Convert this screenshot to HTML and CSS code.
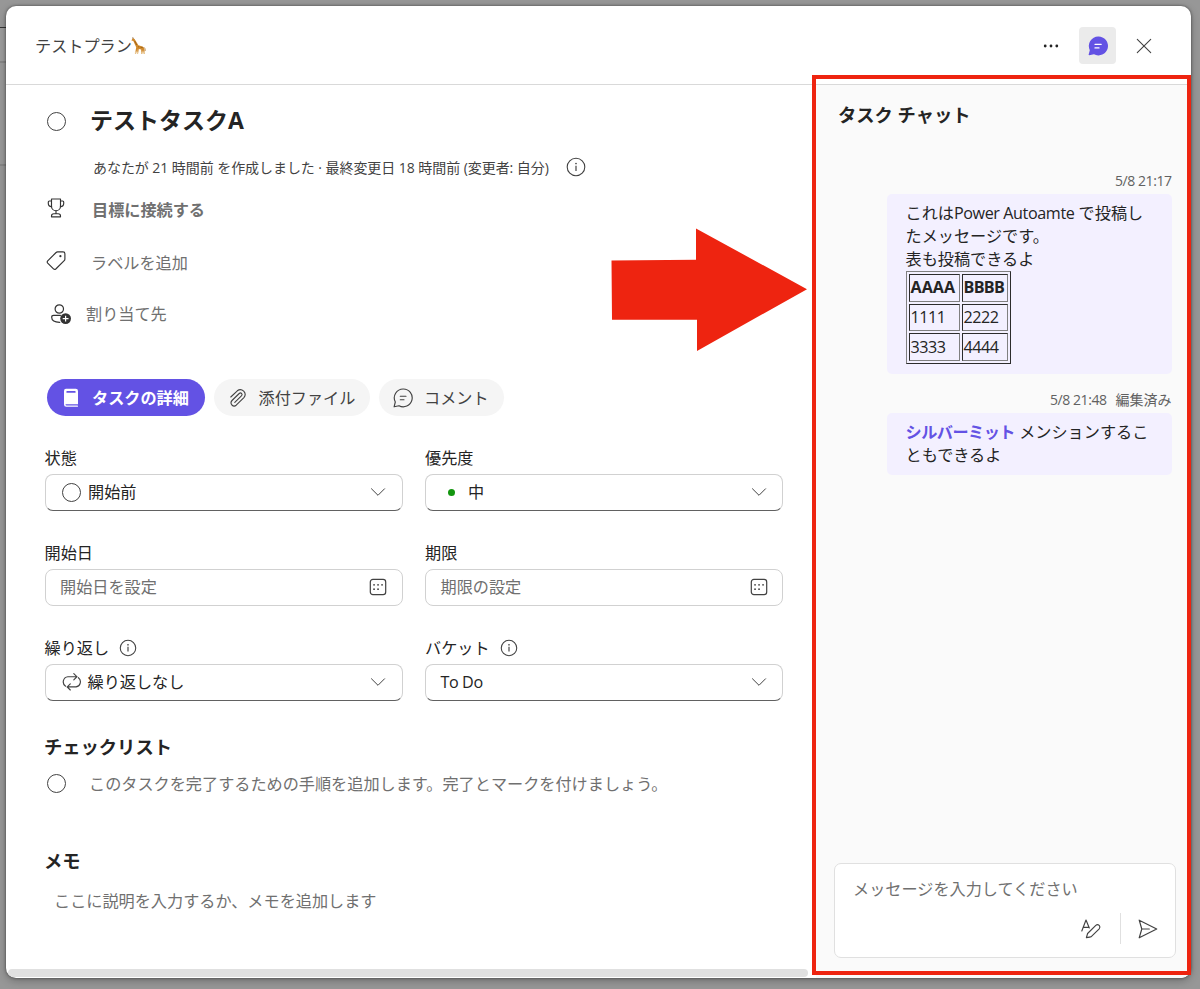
FILE: index.html
```html
<!DOCTYPE html>
<html lang="ja">
<head>
    <meta charset="UTF-8">
    <meta name="viewport" content="width=device-width, initial-scale=1.0">
    <title>テストタスクA</title>
    <link rel="stylesheet" href="styles.css">
</head>
<body>
    <!-- Page behind the dialog -->
    <div class="backdrop"></div>

    <div class="dialog">
        <!-- Header Section -->
        <header>
            <div class="plan-name">
                <span>テストプラン</span>
                <svg class="giraffe" viewBox="0 0 16 18">
                    <path d="M1.6 1.2L3.6 2L7.4 8.2L11.5 9.4Q13.2 10 13.3 12L13.8 17H12.8L12 13L11.2 17H10.2L10.2 12.6L7.8 12L7 17H6L6.3 12L5 17H4L5.2 10.2L2.3 3.9L.4 3.6Z" fill="#d08a2c"/>
                    <path d="M13 10.3Q14.6 11.5 14.2 14" fill="none" stroke="#a8681c" stroke-width=".7"/>
                    <path d="M3.6 4L5.8 8M7 9.8H8.3M9.6 10.4H11.8" stroke="#9c5f18" stroke-width=".9"/>
                    <path d="M4.4 17V14.6M6.5 17V14.6M10.8 17V14.6M13.3 17V14.6" stroke="#f0d9b0" stroke-width=".8"/>
                    <path d="M1.8 .3L2.2 1.8" stroke="#7a4a16" stroke-width=".8"/>
                </svg>
            </div>
            <div class="header-buttons">
                <button class="icon-button">
                    <svg width="18" height="18" viewBox="0 0 18 18" fill="#242424"><circle cx="3.2" cy="9" r="1.4"/><circle cx="9" cy="9" r="1.4"/><circle cx="14.8" cy="9" r="1.4"/></svg>
                </button>
                <button class="icon-button active">
                    <svg width="20" height="20" viewBox="0 0 20 20">
                        <path d="M10.3 .6A9.4 9.4 0 1 1 6 18.2L1.2 19.3Q.5 19.4.6 18.7L1.8 14.2A9.4 9.4 0 0 1 10.3.6Z" fill="#6352e4"/>
                        <path d="M7 8.3H13.2M7 11.9H11" stroke="#fff" stroke-width="1.3" stroke-linecap="round"/>
                    </svg>
                </button>
                <button class="icon-button">
                    <svg width="16" height="16" viewBox="0 0 16 16" fill="none" stroke="#424242" stroke-width="1.1" stroke-linecap="round"><path d="M1.3 1.3L14.7 14.7M14.7 1.3L1.3 14.7"/></svg>
                </button>
            </div>
        </header>

        <div class="main-container">
            <!-- Task form -->
            <main>
                <div class="title-row">
                    <span class="circle"></span>
                    <h1>テストタスクA</h1>
                </div>
                <div class="meta-row">
                    <span class="meta-text">あなたが 21 時間前 を作成しました · 最終変更日 18 時間前 (変更者: 自分)</span>
                    <svg width="20" height="20" viewBox="0 0 20 20"><circle cx="10" cy="10" r="8.8" fill="none" stroke="#424242" stroke-width="1.1"/><path d="M10 8.7V14" stroke="#424242" stroke-width="1.2"/><circle cx="10" cy="6.5" r=".85" fill="#424242"/></svg>
                </div>
                <div class="link-row goal">
                    <svg width="20" height="20" viewBox="0 0 20 20" fill="none" stroke="#333" stroke-width="1.15" stroke-linejoin="round" stroke-linecap="round">
                        <path d="M5.5 1H14.5V8.2A4.5 4.5 0 0 1 5.5 8.2Z"/>
                        <path d="M5.5 3H3.4Q2.3 3 2.3 4.1V5.6Q2.3 8.5 5.6 8.8M14.5 3H16.6Q17.7 3 17.7 4.1V5.6Q17.7 8.5 14.4 8.8M10 12.7V15.5M5.5 18.8V18Q5.5 15.7 7.8 15.7H12.2Q14.5 15.7 14.5 18V18.8Z"/>
                    </svg>
                    <span>目標に接続する</span>
                </div>
                <div class="link-row label">
                    <svg width="20" height="20" viewBox="0 0 20 20">
                        <path d="M10.1 1.5Q10.7 .9 11.5 .9H17Q18.9 .9 18.9 2.8V8Q18.9 9 18.2 9.7L9.8 18Q8.6 19 7.5 17.9L1.7 12.2Q.7 11.1 1.7 9.9Z" fill="none" stroke="#333" stroke-width="1.15"/>
                        <circle cx="14.4" cy="5.2" r="1.1" fill="#333"/>
                    </svg>
                    <span>ラベルを追加</span>
                </div>
                <div class="link-row assign">
                    <svg width="22" height="22" viewBox="0 0 22 22">
                        <g fill="none" stroke="#333" stroke-width="1.2" stroke-linecap="round"><circle cx="9.3" cy="6" r="4.2"/><path d="M10.5 12.3H3.6Q1.7 12.3 1.7 14.2Q1.7 19.4 9.8 19.3"/></g>
                        <circle cx="15.6" cy="15.6" r="5.4" fill="#333"/><path d="M15.6 12.7V18.5M12.7 15.6H18.5" stroke="#fff" stroke-width="1.2"/>
                    </svg>
                    <span>割り当て先</span>
                </div>

                <!-- Tabs -->
                <nav class="tabs">
                    <a class="tab tab-details selected">
                        <svg width="20" height="20" viewBox="0 0 20 20"><path d="M5 .8H14.8Q17 .8 17 3V16.3H4.5Q4.5 17.6 5.6 17.6H16.5Q17 17.6 17 18.2Q17 18.8 16.5 18.8H5.3Q3 18.8 3 16.5V3Q3 .8 5 .8Z" fill="#fff"/><rect x="5.4" y="3" width="9.2" height="1.8" rx=".6" fill="#6352e4"/></svg>
                        <span>タスクの詳細</span>
                    </a>
                    <a class="tab tab-files">
                        <svg width="20" height="20" viewBox="0 0 20 20" fill="none" stroke="#424242" stroke-width="1.1" stroke-linecap="round"><path d="M2.8 9L9.3 2.8Q12.6 .2 15.7 3.2Q18.6 6.4 15.9 9.6L8.2 17.2Q6 19 3.9 17Q2 14.6 4 12.5L11.2 5.5Q12.5 4.4 13.6 5.5Q14.6 6.7 13.4 7.9L6.8 14.3"/></svg>
                        <span>添付ファイル</span>
                    </a>
                    <a class="tab tab-comments">
                        <svg width="20" height="20" viewBox="0 0 20 20" fill="none" stroke="#424242" stroke-width="1.15" stroke-linecap="round" stroke-linejoin="round"><path d="M10.3 1A8.9 8.9 0 1 1 6 17.7L1.1 18.8L2.3 14A8.9 8.9 0 0 1 10.3 1ZM7.3 8.2H13M7.3 11.7H11"/></svg>
                        <span>コメント</span>
                    </a>
                </nav>

                <div class="fields">
                    <div class="field">
                        <label>状態</label>
                        <div class="box select">
                            <span class="circle status"></span><span class="value">開始前</span>
                            <svg class="chevron" viewBox="0 0 16 10"><path d="M1.2 1.5L8 8.3L14.8 1.5"/></svg>
                        </div>
                    </div>
                    <div class="field">
                        <label>優先度</label>
                        <div class="box select">
                            <span class="dot"></span><span class="value">中</span>
                            <svg class="chevron" viewBox="0 0 16 10"><path d="M1.2 1.5L8 8.3L14.8 1.5"/></svg>
                        </div>
                    </div>
                    <div class="field">
                        <label>開始日</label>
                        <div class="box date">
                            <span class="value">開始日を設定</span>
                            <svg class="calendar" viewBox="0 0 18 18"><rect x="1.3" y="1.3" width="15.4" height="15.4" rx="2.6"/><path d="M5 6.8H5.1M9 6.8H9.1M13 6.8H13.1M5 11.2H5.1M9 11.2H9.1"/></svg>
                        </div>
                    </div>
                    <div class="field">
                        <label>期限</label>
                        <div class="box date">
                            <span class="value">期限の設定</span>
                            <svg class="calendar" viewBox="0 0 18 18"><rect x="1.3" y="1.3" width="15.4" height="15.4" rx="2.6"/><path d="M5 6.8H5.1M9 6.8H9.1M13 6.8H13.1M5 11.2H5.1M9 11.2H9.1"/></svg>
                        </div>
                    </div>
                    <div class="field">
                        <label>繰り返し <svg width="18" height="18" viewBox="0 0 20 20"><circle cx="10" cy="10" r="8.6" fill="none" stroke="#424242" stroke-width="1.2"/><path d="M10 8.7V14" stroke="#424242" stroke-width="1.3"/><circle cx="10" cy="6.4" r=".95" fill="#424242"/></svg></label>
                        <div class="box select">
                            <svg class="repeat" viewBox="0 0 20 20"><path d="M3.6 14.2A5.2 5.2 0 0 1 5.9 4.7H14.6M11.8 1.6L14.9 4.7L11.8 7.8M16.4 5.7A5.2 5.2 0 0 1 14.1 14.9H5.6M8.3 11.8L5.2 14.9L8.3 18"/></svg><span class="value">繰り返しなし</span>
                            <svg class="chevron" viewBox="0 0 16 10"><path d="M1.2 1.5L8 8.3L14.8 1.5"/></svg>
                        </div>
                    </div>
                    <div class="field">
                        <label>バケット <svg width="18" height="18" viewBox="0 0 20 20"><circle cx="10" cy="10" r="8.6" fill="none" stroke="#424242" stroke-width="1.2"/><path d="M10 8.7V14" stroke="#424242" stroke-width="1.3"/><circle cx="10" cy="6.4" r=".95" fill="#424242"/></svg></label>
                        <div class="box select">
                            <span class="value latin">To Do</span>
                            <svg class="chevron" viewBox="0 0 16 10"><path d="M1.2 1.5L8 8.3L14.8 1.5"/></svg>
                        </div>
                    </div>
                </div>

                <h2 class="checklist-title">チェックリスト</h2>
                <div class="checklist-row">
                    <span class="circle"></span>
                    <span>このタスクを完了するための手順を追加します。完了とマークを付けましょう。</span>
                </div>

                <h2 class="memo-title">メモ</h2>
                <p class="memo-text">ここに説明を入力するか、メモを追加します</p>
                <div class="scrollbar"></div>
            </main>

            <!-- Chat panel -->
            <aside>
                <h2>タスク チャット</h2>
                <div class="time">5/8 21:17</div>
                <div class="message">
                    <p>これは<span class="latin">Power Autoamte</span> で投稿したメッセージです。</p>
                    <p>表も投稿できるよ</p>
                    <table border="1">
                        <tr><th>AAAA</th><th class="latin">BBBB</th></tr>
                        <tr><td>1111</td><td>2222</td></tr>
                        <tr><td>3333</td><td>4444</td></tr>
                    </table>
                </div>
                <div class="time second">5/8 21:48<span>編集済み</span></div>
                <div class="message">
                    <p class="mention-text"><b>シルバーミット</b> メンションすることもできるよ</p>
                </div>
                <div class="compose">
                    <p>メッセージを入力してください</p>
                    <div class="compose-buttons">
                        <svg width="22" height="22" viewBox="0 0 22 22" fill="none" stroke="#424242" stroke-width="1.15" stroke-linecap="round" stroke-linejoin="round"><path d="M1.8 13L6 2L9.3 10M3.2 9.3H8.3M6.4 19.6L7.6 15.5L15.8 7.4Q17.5 6 19.2 7.4Q20.7 9.1 19.2 10.8L11 18.8Q10.4 19.3 6.4 19.6Z"/></svg>
                        <span class="divider"></span>
                        <svg width="20" height="20" viewBox="0 0 20 20" fill="none" stroke="#424242" stroke-width="1.2" stroke-linecap="round" stroke-linejoin="round"><path d="M1.2 1.2L18.7 10L1.2 18.8L3.8 10ZM3.8 10H11.3"/></svg>
                    </div>
                </div>
            </aside>
        </div>
    </div>

    <!-- Annotations over the dialog -->
    <svg class="arrow" viewBox="0 0 196 124"><path d="M.5 32.5L85 31.8V.5L196 61.2L86 123V91.8H1Z" fill="#ee2410"/></svg>
    <div class="frame"></div>
</body>
</html>
```
FILE: styles.css
```css
/* Basic reset */
* {
    margin: 0;
    padding: 0;
    box-sizing: border-box;
}

body {
    width: 1200px;
    height: 989px;
    padding: 6px;
    overflow: hidden;
    position: relative;
    background-color: #979797;
    color: #242424;
    font-family: "Open Sans", "Noto Sans CJK JP", sans-serif;
    font-size: 16.15px;
    line-height: 24px;
}

svg {
    flex: none;
    display: block;
}

.latin {
    letter-spacing: -0.4px;
}

.backdrop {
    position: absolute;
    left: 0;
    top: 27px;
    width: 10px;
    height: 139px;
    border-top: 1px solid #333;
    border-bottom: 2px solid #868686;
    background: linear-gradient(#9c9c9c 33px, #868686 33px, #868686 35px, #999 35px);
}

.dialog {
    position: relative;
    width: 1185px;
    height: 972px;
    background-color: white;
    border-radius: 10px;
    box-shadow: 0 0 3px rgba(0, 0, 0, 0.5), 0 3px 9px rgba(0, 0, 0, 0.25);
    overflow: hidden;
}

/* Header Section */
header {
    height: 79px;
    padding: 1px 28.5px 0 29px;
    border-bottom: 1px solid #d9d9d9;
    display: flex;
    align-items: center;
    justify-content: space-between;
}

.plan-name {
    display: flex;
    align-items: center;
    color: #424242;
}

.giraffe {
    width: 16px;
    height: 18px;
    margin-left: -1px;
}

.header-buttons {
    display: flex;
    gap: 9.5px;
}

.icon-button {
    width: 37px;
    height: 37px;
    border: none;
    border-radius: 4px;
    background: none;
    display: flex;
    align-items: center;
    justify-content: center;
}

.icon-button.active {
    background-color: #ebebeb;
}

.main-container {
    display: flex;
    height: 893px;
}

/* Task form */
main {
    width: 810px;
    padding: 0 33px 0 38px;
}

.circle {
    flex: none;
    width: 19px;
    height: 19px;
    border: 1px solid #424242;
    border-radius: 50%;
}

.title-row {
    height: 72px;
    padding: 1px 0 0 3px;
    display: flex;
    align-items: center;
    gap: 24px;
}

h1 {
    font-size: 23px;
    line-height: 34px;
    padding-bottom: 3px;
}

.meta-row {
    height: 22px;
    padding-left: 49px;
    display: flex;
    align-items: center;
    gap: 17px;
    font-size: 14px;
    letter-spacing: -0.06px;
    color: #424242;
}

.meta-row svg {
    margin-bottom: 2px;
}

.meta-text {
    white-space: nowrap;
}

.link-row {
    height: 52px;
    padding-left: 2px;
    display: flex;
    align-items: center;
    gap: 26px;
    color: #707070;
}

.goal {
    margin-top: 5px;
    font-weight: bold;
}

.goal svg {
    margin-bottom: 5px;
}

.label {
    padding-top: 2px;
    gap: 25px;
}

.label svg {
    margin-bottom: 5px;
}

.assign {
    padding-left: 6px;
    gap: 14px;
}

.tabs {
    margin: 39px 0 0 3px;
    display: flex;
    gap: 9px;
}

.tab {
    height: 37px;
    border-radius: 19px;
    background-color: #f5f5f5;
    color: #424242;
    display: flex;
    align-items: center;
    gap: 11px;
    padding-left: 14px;
}

.tab-details {
    width: 157.5px;
}

.tab-files {
    width: 156.5px;
}

.tab-comments {
    width: 125px;
}

.tab.selected {
    background-color: #6352e4;
    color: white;
    font-weight: bold;
}

.fields {
    margin: 29.5px 0 0 0.5px;
    display: grid;
    grid-template-columns: 358px 358px;
    gap: 30px 22.5px;
}

.field label {
    height: 24px;
    margin-bottom: 4px;
    display: flex;
    align-items: center;
    gap: 10px;
}

.box {
    height: 37px;
    padding: 0 14.5px;
    border: 1px solid #d1d1d1;
    border-radius: 8px;
    display: flex;
    align-items: center;
}

.box .value {
    flex: 1;
}

.select {
    padding-right: 15.5px;
    border-bottom-color: #616161;
}

.date {
    color: #707070;
}

.status {
    margin: 0 7px 0 2px;
}

.dot {
    width: 7px;
    height: 7px;
    margin: 0 13px 0 7.5px;
    border-radius: 50%;
    background-color: #13960f;
}

.chevron {
    width: 16px;
    height: 10px;
    fill: none;
    stroke: #424242;
    stroke-width: 1;
}

.calendar {
    width: 18px;
    height: 18px;
    fill: none;
    stroke: #424242;
    stroke-width: 1.2;
    stroke-linecap: round;
}

.calendar path {
    stroke-width: 1.7;
}

.repeat {
    width: 20px;
    height: 20px;
    margin: 0 6px 0 1.5px;
    fill: none;
    stroke: #424242;
    stroke-width: 1.15;
    stroke-linecap: round;
}

h2 {
    font-size: 18.3px;
    line-height: 24px;
}

.checklist-title {
    margin-top: 34px;
}

.checklist-row {
    margin-top: 13px;
    padding-left: 3px;
    display: flex;
    align-items: center;
    gap: 23px;
    color: #707070;
}

.memo-title {
    margin-top: 53px;
}

.memo-text {
    margin: 16px 0 0 10px;
    color: #707070;
}

.scrollbar {
    width: 800px;
    height: 8px;
    margin: 56px 0 0 -36px;
    border-radius: 4px;
    background-color: #e0e0e0;
}

/* Chat panel */
aside {
    flex: 1;
    padding: 18px 15px 20px 18px;
    background-color: #fafafa;
    display: flex;
    flex-direction: column;
}

aside h2 {
    padding-left: 4px;
}

.time {
    margin: 44px 4.5px 0 0;
    font-size: 14px;
    line-height: 20px;
    letter-spacing: -0.45px;
    text-align: right;
    color: #616161;
}

.time.second {
    margin-top: 16px;
}

.time span {
    margin-left: 9px;
    letter-spacing: 0;
}

.message {
    width: 285px;
    margin: 3px 4.5px 0 auto;
    padding: 8px 19px;
    border-radius: 5px;
    background-color: #f3f0ff;
    line-height: 23px;
}

.mention-text b {
    color: #6352e4;
    letter-spacing: -0.5px;
}

table {
    width: 105px;
    height: 93px;
    margin-bottom: 2px;
    table-layout: fixed;
    border-color: gray;
}

th:first-child {
    width: 51px;
}

td, th {
    padding: 1px;
    text-align: left;
}

td {
    letter-spacing: -0.5px;
}

th.latin {
    letter-spacing: -0.7px;
}

.compose {
    width: 342px;
    height: 95px;
    margin: auto 0 0 0;
    padding: 13px 17px 13px 18px;
    border: 1px solid #e0e0e0;
    border-radius: 7px;
    background-color: white;
    color: #707070;
}

.compose-buttons {
    margin-top: 12px;
    display: flex;
    align-items: center;
    justify-content: flex-end;
    gap: 17.5px;
}

.divider {
    width: 1px;
    height: 31px;
    background-color: #e0e0e0;
}

/* Annotations */
.arrow {
    position: absolute;
    left: 611px;
    top: 228px;
    width: 196px;
    height: 124px;
}

.frame {
    position: absolute;
    left: 812px;
    top: 75px;
    width: 379px;
    height: 900px;
    border: 4.5px solid #ee2410;
}
```
